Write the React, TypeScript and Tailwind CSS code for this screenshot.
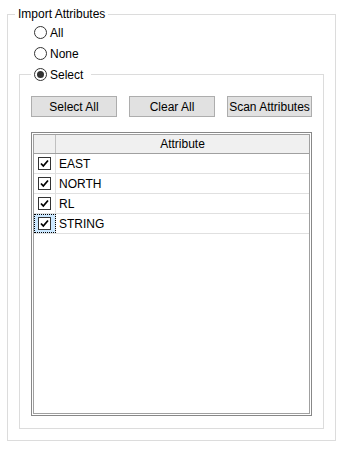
import React from 'react';

function Radio({ label, checked = false }: { label: string; checked?: boolean }) {
  return (
    <div className="flex items-center gap-[3px] h-[21px]">
      <span className="w-[13px] h-[13px] rounded-full border border-[#333333] bg-white flex items-center justify-center">
        {checked && <span className="w-[7px] h-[7px] rounded-full bg-[#333333]" />}
      </span>
      <span>{label}</span>
    </div>
  );
}

function Check() {
  return (
    <span className="w-[13px] h-[13px] border border-[#333333] bg-white flex items-center justify-center">
      <svg width="11" height="11" viewBox="0 0 11 11">
        <polyline points="2,5.5 4.3,8 9,2.5" fill="none" stroke="#000" strokeWidth="1.8" />
      </svg>
    </span>
  );
}

const rows = ['EAST', 'NORTH', 'RL', 'STRING'];

export default function App() {
  return (
    <div className="w-[346px] h-[450px] bg-white pl-[7px] pt-[7px] font-['Liberation_Sans',sans-serif] text-[12px] text-black">
      <fieldset className="w-[329px] h-[434px] border border-[#dcdcdc] pl-[7px]">
        <legend className="px-[3px] h-[14px] leading-[14px]">Import Attributes</legend>
        <div className="pl-[19px] pt-px">
          <Radio label="All" />
          <Radio label="None" />
        </div>
        <fieldset className="ml-[4px] w-[305px] h-[365px] border border-[#dcdcdc] px-[11px] pb-[12px] flex flex-col">
          <legend className="pl-[3px] pr-[8px]">
            <Radio label="Select" checked />
          </legend>
          <div className="flex justify-between mt-[11px]">
            {['Select All', 'Clear All', 'Scan Attributes'].map((b, i) => (
              <button
                key={b}
                className={`${i === 2 ? 'w-[85px]' : 'w-[86px]'} h-[21px] bg-[#e1e1e1] border border-[#adadad] flex items-center justify-center whitespace-nowrap`}
              >
                {b}
              </button>
            ))}
          </div>
          <div className="mt-[15px] flex-1 border border-[#888888] p-px">
            <div className="h-full border border-[#a0a0a0] bg-white">
              <div className="flex h-[19px] bg-[#f0f0f0] border-b border-[#a0a0a0]">
                <div className="w-[22px] border-r border-[#c0c0c0]" />
                <div className="flex-1 flex items-center justify-center">Attribute</div>
              </div>
              {rows.map((r, i) => (
                <div key={r} className="flex h-[20px] border-b border-[#e0e0e0]">
                  <div
                    className={`w-[22px] border-r border-[#e0e0e0] flex items-center justify-center ${
                      i === 3 ? 'bg-[#cce8ff] outline-1 outline-dotted outline-[#000] -outline-offset-1' : ''
                    }`}
                  >
                    <Check />
                  </div>
                  <div className="flex-1 flex items-center pl-[3px]">{r}</div>
                </div>
              ))}
            </div>
          </div>
        </fieldset>
      </fieldset>
    </div>
  );
}
